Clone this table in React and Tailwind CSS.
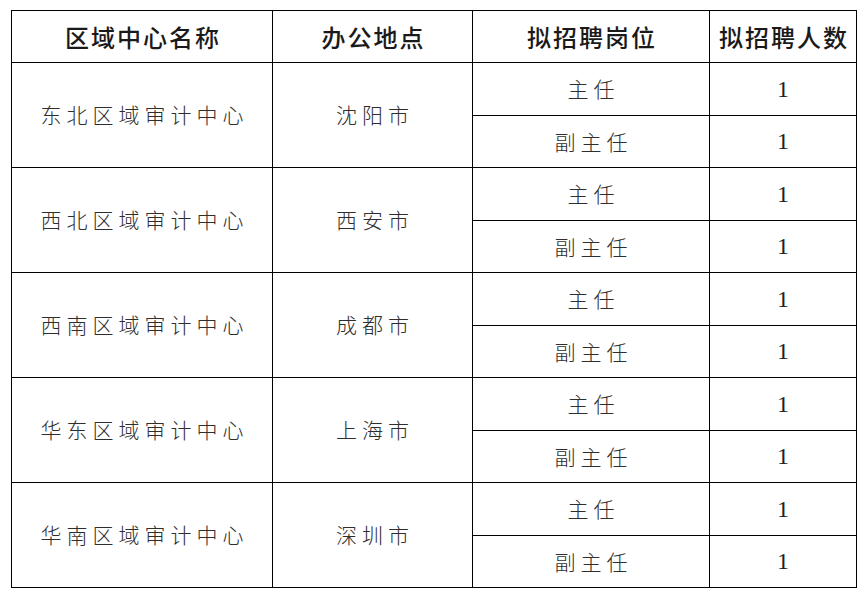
import { Fragment } from 'react';

const groups = [
  { name: '东北区域审计中心', city: '沈阳市' },
  { name: '西北区域审计中心', city: '西安市' },
  { name: '西南区域审计中心', city: '成都市' },
  { name: '华东区域审计中心', city: '上海市' },
  { name: '华南区域审计中心', city: '深圳市' },
];

const cjk = "font-['Noto_Sans_CJK_SC',sans-serif]";
const bodyCell = `border border-black text-center text-[21px] font-light text-[#2e2e2e] tracking-[5px] pl-[5px] ${cjk}`;
const numCell = "border border-black text-center text-[24px] font-normal text-[#222] font-['Liberation_Serif',serif]";

export default function App() {
  return (
    <div className="w-[868px] h-[606px] bg-white pt-[10px] pl-[11px]">
      <table className="table-fixed border-collapse w-[845px] border border-black">
        <colgroup>
          <col className="w-[261px]" />
          <col className="w-[200px]" />
          <col className="w-[237px]" />
          <col className="w-[147px]" />
        </colgroup>
        <thead>
          <tr className="h-[52px]">
            {['区域中心名称', '办公地点', '拟招聘岗位', '拟招聘人数'].map((h) => (
              <th
                key={h}
                className={`border border-black text-center text-[24px] font-medium text-[#1a1a1a] tracking-[2px] pl-[2px] ${cjk}`}
              >
                {h}
              </th>
            ))}
          </tr>
        </thead>
        <tbody>
          {groups.map((g) => (
            <Fragment key={g.name}>
              <tr className="h-[52.5px]">
                <td rowSpan={2} className={bodyCell}>
                  {g.name}
                </td>
                <td rowSpan={2} className={bodyCell}>
                  {g.city}
                </td>
                <td className={bodyCell}>主任</td>
                <td className={numCell}>1</td>
              </tr>
              <tr className="h-[52.5px]">
                <td className={bodyCell}>副主任</td>
                <td className={numCell}>1</td>
              </tr>
            </Fragment>
          ))}
        </tbody>
      </table>
    </div>
  );
}
